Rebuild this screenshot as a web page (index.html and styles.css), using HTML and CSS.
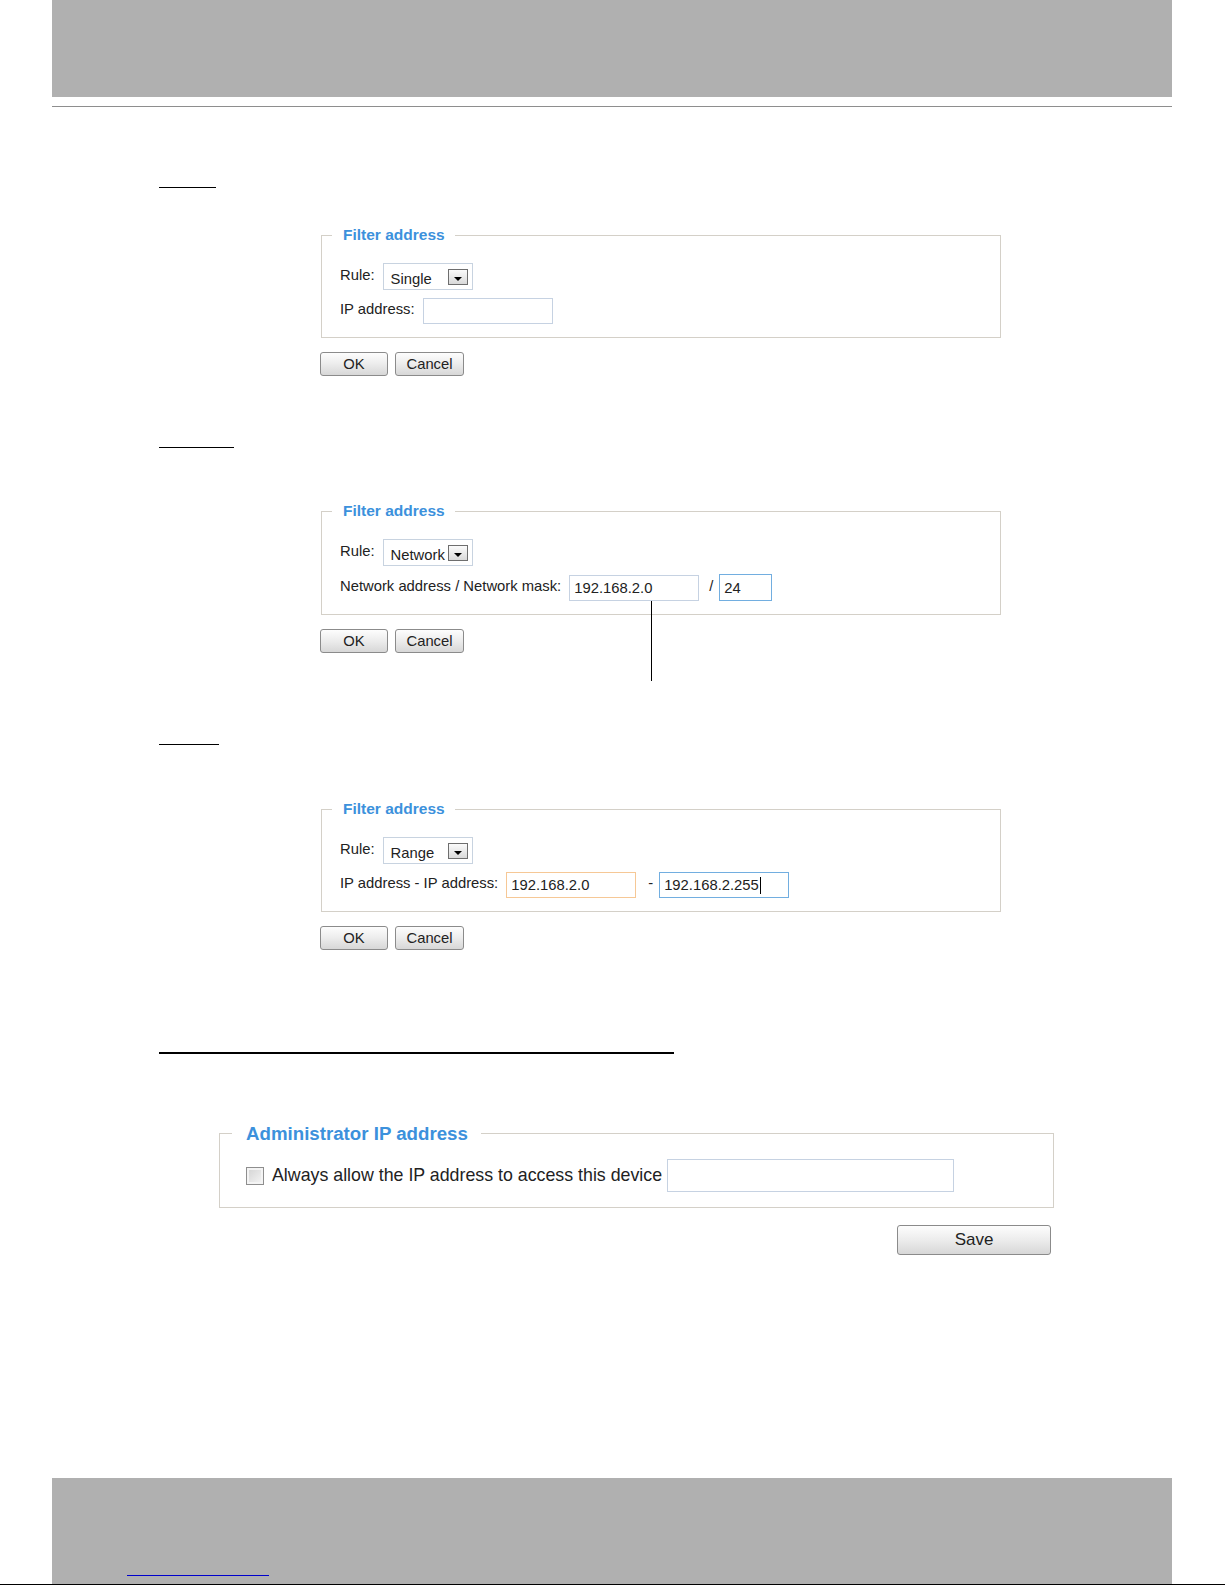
FILE: index.html
```html
<!DOCTYPE html>
<html lang="en">
<head>
<meta charset="UTF-8" />
<meta name="viewport" content="width=device-width, initial-scale=1" />
<title>Access list - Filter address</title>
<link rel="stylesheet" href="styles.css">
</head>
<body>

<div class="page">

  <div class="header"></div>
  <div class="header-rule"></div>

  <div class="content">

    <!-- Single -->
    <div class="mark mark-single"></div>
    <div class="filter-block">
      <fieldset class="filter">
        <legend>Filter address</legend>
        <div class="row">
          <label class="lbl">Rule:</label>
          <div class="select"><span class="select-value">Single</span><span class="select-arrow"></span></div>
        </div>
        <div class="row">
          <label class="lbl">IP address:</label>
          <input class="field" type="text" />
        </div>
      </fieldset>
      <div class="actions">
        <button class="btn btn-ok">OK</button>
        <button class="btn btn-cancel">Cancel</button>
      </div>
    </div>

    <!-- Network -->
    <div class="mark mark-network"></div>
    <div class="filter-block block-network">
      <fieldset class="filter">
        <legend>Filter address</legend>
        <div class="row">
          <label class="lbl">Rule:</label>
          <div class="select"><span class="select-value">Network</span><span class="select-arrow"></span></div>
        </div>
        <div class="row">
          <label class="lbl">Network address / Network mask:</label>
          <input class="field" type="text" value="192.168.2.0" />
          <span class="sep sep-slash">/</span>
          <input class="field field-mask is-focus" type="text" value="24" />
        </div>
      </fieldset>
      <div class="actions">
        <button class="btn btn-ok">OK</button>
        <button class="btn btn-cancel">Cancel</button>
      </div>
      <div class="callout"></div>
    </div>

    <!-- Range -->
    <div class="mark mark-range"></div>
    <div class="filter-block block-range">
      <fieldset class="filter">
        <legend>Filter address</legend>
        <div class="row">
          <label class="lbl">Rule:</label>
          <div class="select"><span class="select-value">Range</span><span class="select-arrow"></span></div>
        </div>
        <div class="row">
          <label class="lbl">IP address - IP address:</label>
          <input class="field is-hover" type="text" value="192.168.2.0" />
          <span class="sep sep-dash">-</span>
          <div class="field is-focus">192.168.2.255<span class="caret"></span></div>
        </div>
      </fieldset>
      <div class="actions">
        <button class="btn btn-ok">OK</button>
        <button class="btn btn-cancel">Cancel</button>
      </div>
    </div>

    <!-- Administrator IP address -->
    <div class="mark mark-admin"></div>
    <div class="admin-block">
      <fieldset class="admin">
        <legend>Administrator IP address</legend>
        <div class="admin-row">
          <input class="check" type="checkbox" id="alwaysAllow" />
          <label class="admin-lbl" for="alwaysAllow">Always allow the IP address to access this device</label>
          <input class="field field-admin" type="text" />
        </div>
      </fieldset>
      <div class="save-row">
        <button class="btn btn-save">Save</button>
      </div>
    </div>

  </div>

  <div class="footer">
    <span class="footer-link"></span>
  </div>
  <div class="footer-rule"></div>

</div>

</body>
</html>
```

FILE: styles.css
```css
body {
  margin: 0;
  font-family: "Liberation Sans", Arial, sans-serif;
  color: #222;
  background: white;
}
.page {
  min-height: 1585px;
  display: flex;
  flex-direction: column;
}
.header {
  height: 97px;
  margin: 0 53px 0 52px;
  background-color: #b0b0b0;
}
.header-rule {
  height: 1px;
  margin: 9px 53px 0 52px;
  background-color: #8e8e8e;
}
.content {
  padding-left: 159px;
}

/* underline marks of the section titles */
.mark {
  height: 0;
  border-bottom: 1px solid #000;
}
.mark-single {
  width: 57px;
  margin-top: 80px;
}
.mark-network {
  width: 75px;
  margin-top: 71px;
}
.mark-range {
  width: 60px;
  margin-top: 91px;
}
.mark-admin {
  width: 515px;
  margin-top: 102px;
  border-bottom-width: 2px;
}

/* filter address boxes */
.filter-block {
  position: relative;
  width: 680px;
  margin: 38px 0 0 162px;
}
.block-network {
  margin-top: 54px;
}
.block-range {
  margin-top: 55px;
}
fieldset {
  margin: 0;
  border: 1px solid #d4d0c8;
  box-sizing: border-box;
}
.filter {
  width: 680px;
  padding: 19px 10px 13px 18px;
}
.filter legend {
  margin-left: -8px;
  padding: 0 10px 0 11px;
  font-size: 15.5px;
  line-height: 18px;
  font-weight: bold;
  color: #3c91dc;
}
.row {
  display: flex;
  align-items: center;
  gap: 8px;
}
.row + .row {
  margin-top: 8px;
}
.row:first-of-type {
  height: 27px;
}
.lbl {
  font-size: 14.8px;
  margin-bottom: 4px;
}
.select {
  display: flex;
  align-items: center;
  justify-content: space-between;
  width: 90px;
  height: 27px;
  box-sizing: border-box;
  border: 1px solid #c8d3e0;
  padding: 0 4px 0 7px;
  font-size: 14.8px;
  background: white;
}
.select-value {
  padding-top: 5px;
}
.select-arrow {
  position: relative;
  width: 20px;
  height: 16px;
  box-sizing: border-box;
  border: 1px solid #6e6e6e;
  background: linear-gradient(#fbfbfb, #d9d9d9);
}
.select-arrow::after {
  content: "";
  position: absolute;
  left: 5px;
  top: 7px;
  border-left: 4px solid transparent;
  border-right: 4px solid transparent;
  border-top: 4px solid #000;
}
.field {
  width: 130px;
  height: 26px;
  box-sizing: border-box;
  border: 1px solid #c6d2e2;
  padding: 0 4px;
  font-family: "Liberation Sans", Arial, sans-serif;
  font-size: 14.8px;
  color: #222;
  background: white;
  outline: none;
  margin: 0;
}
div.field {
  display: flex;
  align-items: center;
}
.field-mask {
  width: 53px;
  height: 27px;
}
.is-focus {
  border-color: #72aee0;
}
.is-hover {
  border-color: #f6c896;
}
.caret {
  display: inline-block;
  width: 1px;
  height: 17px;
  margin-left: 1px;
  background: #000;
}
.sep {
  font-size: 14.8px;
  margin-bottom: 4px;
}
.sep-slash {
  margin: 0 -2px 4px 2px;
}
.sep-dash {
  margin: 0 -2px 4px 4px;
}

/* callout line below the network address */
.callout {
  position: absolute;
  left: 330px;
  top: 99px;
  width: 1px;
  height: 80px;
  background: #000;
}

/* buttons */
.actions {
  display: flex;
  gap: 7px;
  margin: 14px 0 0 -1px;
}
.btn {
  height: 24px;
  padding: 0;
  border: 1px solid #8b8b8b;
  border-radius: 3px;
  background: linear-gradient(#fdfdfd, #ececec 50%, #d7d7d7);
  font-family: "Liberation Sans", Arial, sans-serif;
  font-size: 14.8px;
  color: #222;
  cursor: pointer;
}
.btn-ok {
  width: 68px;
}
.btn-cancel {
  width: 69px;
}
.btn-save {
  width: 154px;
  height: 30px;
  font-size: 17px;
}

/* administrator box */
.admin-block {
  width: 835px;
  margin: 68px 0 0 60px;
}
.admin {
  width: 835px;
  padding: 15px 10px 15px 26px;
}
.admin legend {
  margin-left: -14px;
  padding: 0 13px 0 14px;
  font-size: 18.7px;
  line-height: 20px;
  padding-top: 2px;
  font-weight: bold;
  color: #3c91dc;
}
.admin-row {
  display: flex;
  align-items: center;
  height: 33px;
}
.check {
  appearance: none;
  width: 18px;
  height: 18px;
  margin: 0 8px 0 0;
  border: 1px solid #8e8e8e;
  box-shadow: inset 0 0 0 2px #f4f4f4;
  background: linear-gradient(135deg, #d2d2d2, #f6f6f6);
}
.admin-lbl {
  font-size: 17.8px;
  margin-right: 5px;
}
.field-admin {
  width: 287px;
  height: 33px;
}
.save-row {
  display: flex;
  justify-content: flex-end;
  padding-right: 3px;
  margin-top: 17px;
}

/* footer */
.footer {
  margin: auto 53px 0 52px;
  height: 106px;
  display: flex;
  align-items: flex-end;
  background-color: #b0b0b0;
}
.footer-link {
  width: 142px;
  margin: 0 0 8px 75px;
  border-bottom: 1px solid #0000cc;
}
.footer-rule {
  height: 1px;
  background: #000;
}
```
